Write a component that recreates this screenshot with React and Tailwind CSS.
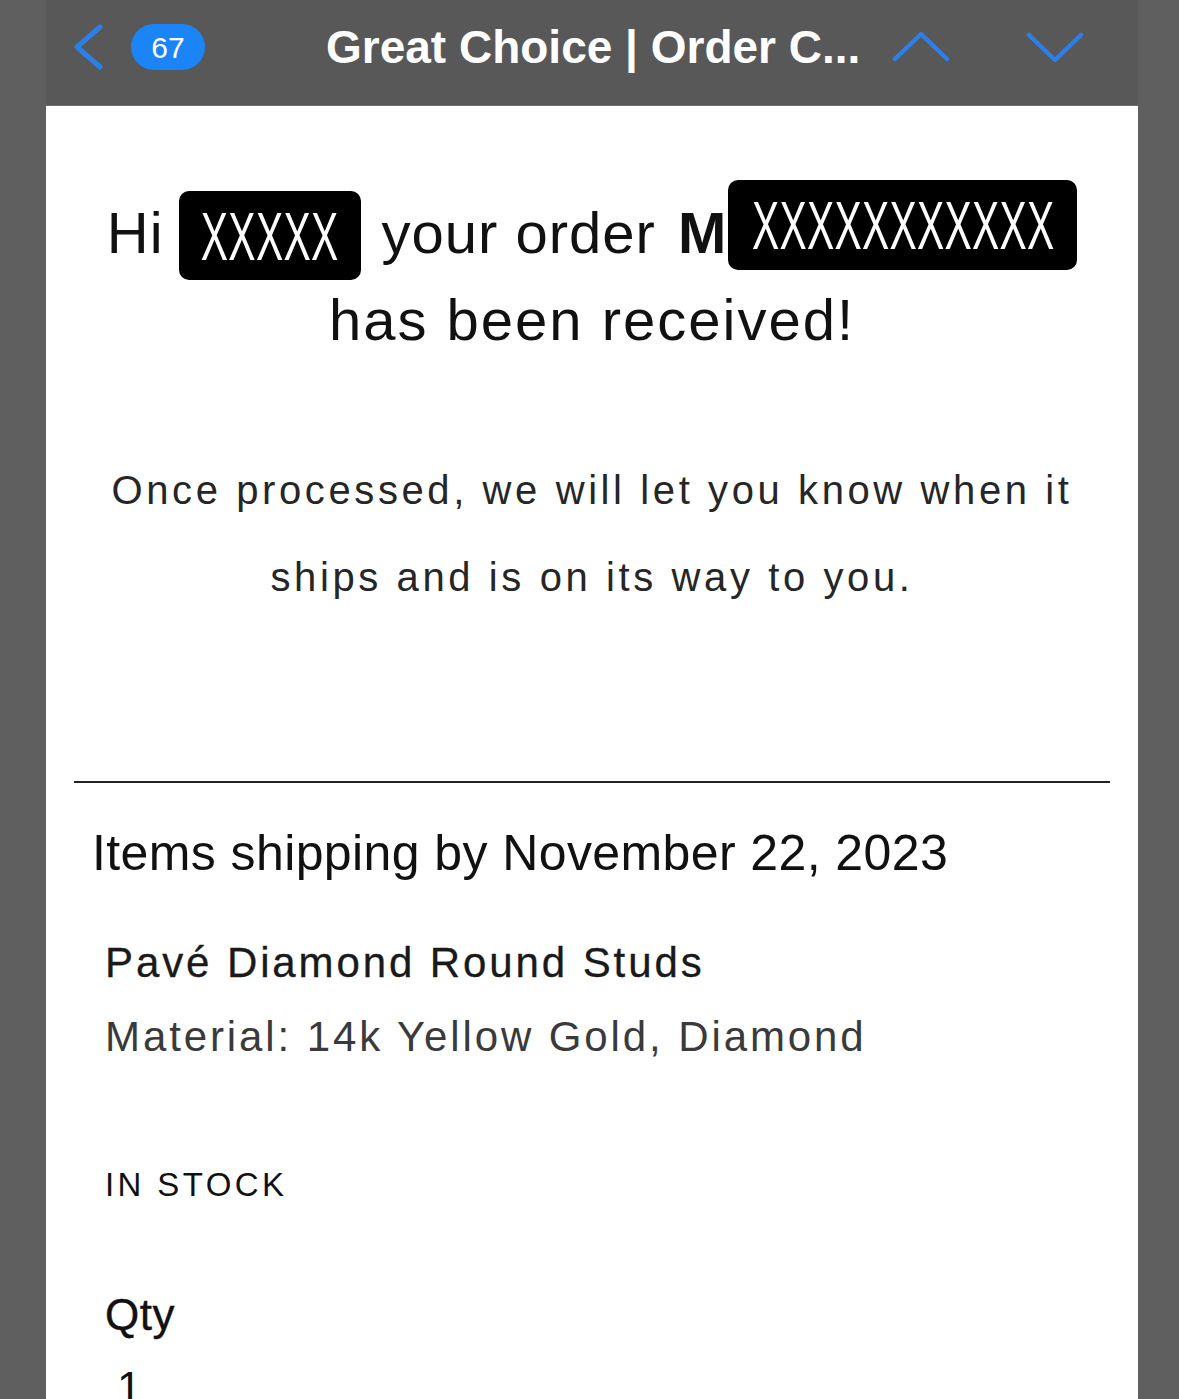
import React from 'react';

const SANS = { fontFamily: '"Liberation Sans", Arial, Helvetica, sans-serif' };

function Redacted({ text, className }) {
  return (
    <div className={`flex shrink-0 items-center justify-center overflow-hidden rounded-[10px] bg-black ${className}`}>
      <span className="inline-block origin-center scale-x-[0.6] whitespace-nowrap text-[68px] leading-none tracking-[0.5px] text-white">
        {text}
      </span>
    </div>
  );
}

function Chevron({ points, w, h, stroke = 5 }) {
  return (
    <svg width={w} height={h} viewBox={`0 0 ${w} ${h}`} fill="none" className="shrink-0">
      <polyline
        points={points}
        stroke="#2d7fe8"
        strokeWidth={stroke}
        strokeLinecap="round"
        strokeLinejoin="round"
      />
    </svg>
  );
}

export default function App() {
  return (
    <div className="h-[1399px] w-full overflow-hidden bg-[#5f5f5f]" style={SANS}>
      <div className="ml-[46px] w-[1092px]">
        {/* mail header */}
        <div className="h-[106px] border-b border-[#6a6a6a] bg-[#585858]">
          <div className="flex h-[94px] items-center">
            <div className="ml-[26px]">
              <Chevron w={32} h={46} points="28,3 5,23 28,43" />
            </div>
            <div className="ml-[27px] flex h-[46px] w-[74px] items-center justify-center rounded-full bg-[#1b84f6] text-[30px] text-white">
              67
            </div>
            <div className="ml-[121px] w-[566px] whitespace-nowrap text-[46px] font-bold leading-[52px] text-white">
              Great Choice | Order C...
            </div>
            <Chevron w={58} h={32} stroke={4.5} points="3,28 29,3 55,28" />
            <div className="ml-[76px]">
              <Chevron w={58} h={32} stroke={4.5} points="3,4 29,29 55,4" />
            </div>
          </div>
        </div>

        {/* message body */}
        <div className="bg-white pb-[40px] pt-[74px]">
          <div className="text-center text-[#111]">
            <div className="flex items-start justify-center">
              <span className="mt-[18px] text-[58px] leading-[70px] tracking-[1px]">Hi</span>
              <Redacted text="XXXXX" className="ml-[15px] mt-[11px] h-[89px] w-[182px]" />
              <span className="ml-[21px] mt-[18px] whitespace-nowrap text-[58px] leading-[70px] tracking-[1px]">
                your order
              </span>
              <span className="ml-[22px] mt-[18px] text-[58px] font-bold leading-[70px]">M</span>
              <Redacted text="XXXXXXXXXXX" className="ml-[2px] h-[90px] w-[349px]" />
            </div>
            <p className="mt-[5px] text-[58px] leading-[70px] tracking-[2px]">has been received!</p>
          </div>

          <p className="mt-[92px] text-center text-[40px] leading-[87px] tracking-[3.6px] text-[#262626]">
            Once processed, we will let you know when it
            <br />
            ships and is on its way to you.
          </p>

          <div className="mx-[28px] mt-[160px] h-[2px] bg-[#222]" />

          <h2 className="ml-[46px] mt-[40px] text-[50px] leading-[60px] tracking-[0.4px] text-[#111]">
            Items shipping by November 22, 2023
          </h2>

          <div className="pl-[59px]">
            <div className="mt-[55px] text-[42px] leading-[50px] tracking-[2.9px] text-[#1a1a1a] [-webkit-text-stroke:0.3px_#1a1a1a]">
              Pavé Diamond Round Studs
            </div>
            <div className="mt-[24px] text-[42px] leading-[50px] tracking-[2.9px] text-[#3a3a3a]">
              Material: 14k Yellow Gold, Diamond
            </div>
            <div className="mt-[103px] text-[33px] leading-[40px] tracking-[3.4px] text-[#111]">IN STOCK</div>
            <div className="mt-[84px] text-[44px] leading-[52px] tracking-[0.5px] text-[#111] [-webkit-text-stroke:0.4px_#111]">
              Qty
            </div>
            <div className="ml-[12px] mt-[21px] text-[44px] leading-[52px] text-[#111]">1</div>
          </div>
        </div>
      </div>
    </div>
  );
}
